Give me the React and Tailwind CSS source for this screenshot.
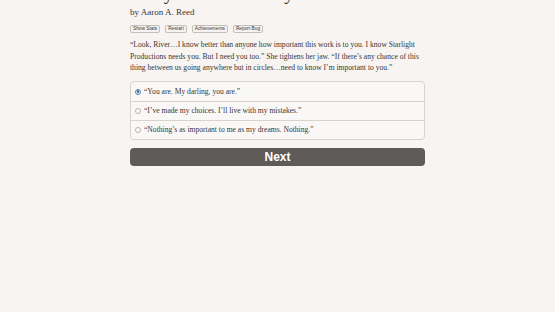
import React, { useState } from 'react';

const choices = [
  '“You are. My darling, you are.”',
  '“I’ve made my choices. I’ll live with my mistakes.”',
  '“Nothing’s as important to me as my dreams. Nothing.”',
];

const serif = { fontFamily: '"Liberation Serif", "DejaVu Serif", serif' };
const sans = { fontFamily: '"Liberation Sans", Arial, sans-serif' };

export default function App() {
  const [picked, setPicked] = useState(0);

  return (
    <div className="h-[312px] w-full overflow-hidden bg-[#f7f4f1] text-[#3a3633]" style={serif}>
      <div className="ml-[130px] w-[295px] pt-[3px]">
        <h1 className="-mt-[20px] text-[19px] leading-[22px] text-[#3a3633]">Hollywood Visionary</h1>
        <p className="text-[9px] leading-[14px]">by Aaron A. Reed</p>

        <div className="mt-[6px] flex gap-[5px]">
          {['Show Stats', 'Restart', 'Achievements', 'Report Bug'].map(b => (
            <button
              key={b}
              className="h-[8px] px-[2px] rounded-[2px] border border-[#c4beb8] bg-[#f5f3f1] text-[4.8px] leading-[6px] text-[#3a3633]"
              style={sans}
            >
              {b}
            </button>
          ))}
        </div>

        <p className="mt-[6px] text-[7.6px] leading-[11.7px]">
          “Look, River…I know better than anyone how important this work is to you. I know Starlight Productions needs you. But I need you too.” She tightens her jaw. “If there’s any chance of this thing between us going anywhere but in circles…need to know I’m important to you.”
        </p>

        <div className="mt-[7px] rounded-[4px] border border-[#d9d3cd] bg-[#faf8f6]">
          {choices.map((c, i) => (
            <label
              key={i}
              onClick={() => setPicked(i)}
              className={`flex h-[19px] items-center gap-[3px] px-[4px] text-[7.6px] cursor-pointer ${i > 0 ? 'border-t border-[#d9d3cd]' : ''}`}
            >
              <span className={`flex h-[6px] w-[6px] items-center justify-center rounded-full border ${picked === i ? 'border-[#5d87b5] bg-[#dfe9f4]' : 'border-[#b5afa9] bg-white'}`}>
                {picked === i && <span className="h-[2.5px] w-[2.5px] rounded-full bg-[#3b6ea5]" />}
              </span>
              {c}
            </label>
          ))}
        </div>

        <button
          className="mt-[8px] flex h-[18px] w-full items-center justify-center rounded-[4px] bg-[#5f5b58] text-[12px] font-bold text-white"
          style={sans}
        >
          Next
        </button>
      </div>
    </div>
  );
}
